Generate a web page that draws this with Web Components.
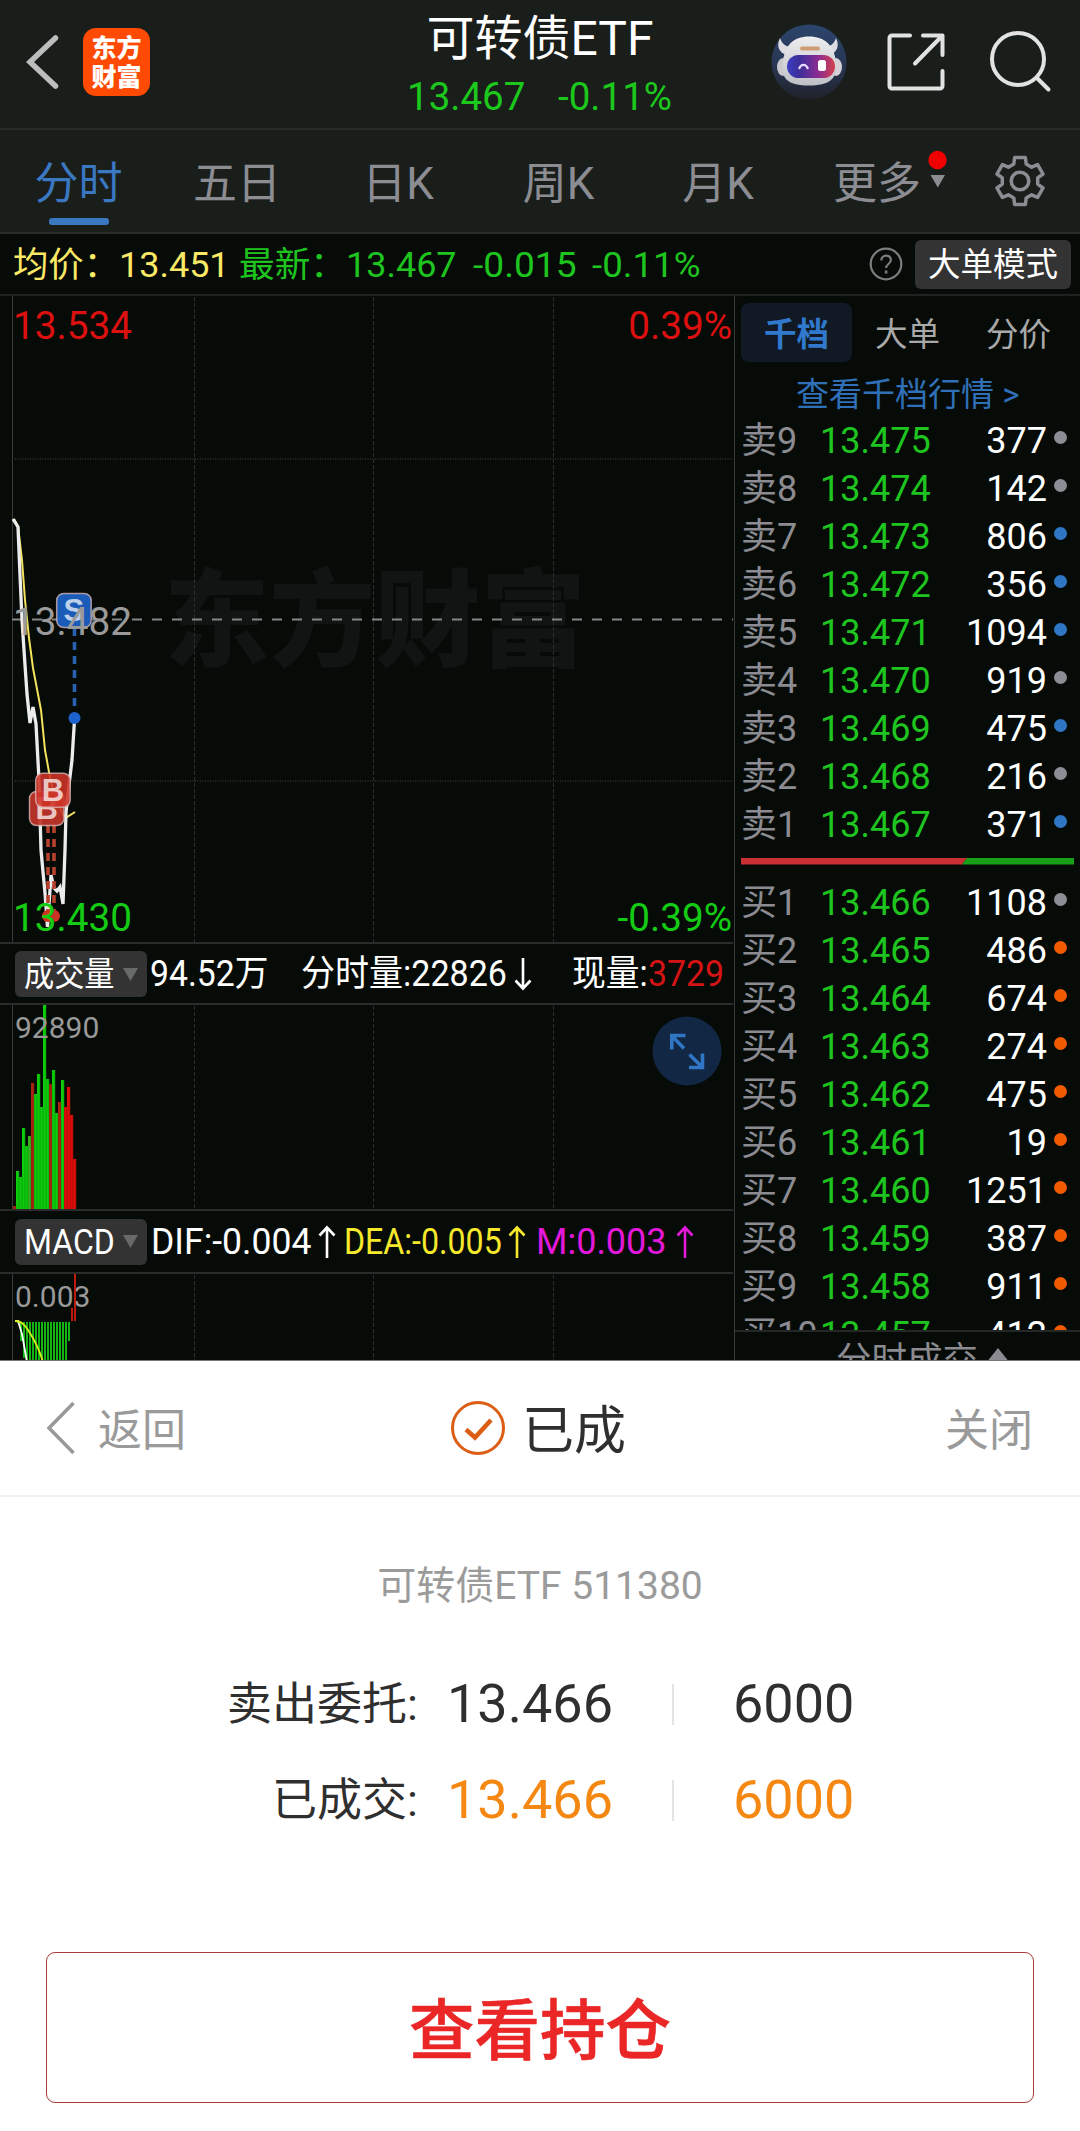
<!DOCTYPE html>
<html lang="zh-CN">
<head>
<meta charset="utf-8">
<title>可转债ETF</title>
<style>
    body {
        margin: 0;
        font-family: Roboto, "Noto Sans CJK SC", sans-serif;
        background: #fff;
    }
</style>
</head>
<body>
<stock-page></stock-page>

<script>
// attaches an open shadow root filled with the given markup
function render(el, html) {
    const template = document.createElement('template');
    template.innerHTML = html;
    el.attachShadow({ mode: 'open' }).appendChild(template.content.cloneNode(true));
}

// text squeezed or stretched to an exact width
class FitText extends HTMLElement {
    connectedCallback() {
        render(this, /*html*/`
            <style>
                :host { display: block; flex: none; white-space: nowrap; }
                span { display: inline-block; transform-origin: 0 50%; }
            </style>
            <span><slot></slot></span>
        `);
        const w = Number(this.getAttribute('w'));
        const span = this.shadowRoot.querySelector('span');
        this.style.width = w + 'px';
        span.style.transform = `scaleX(${w / span.offsetWidth})`;
    }
}
customElements.define('fit-text', FitText);

class TrendArrow extends HTMLElement {
    connectedCallback() {
        const down = this.hasAttribute('down');
        render(this, /*html*/`
            <style>
                :host { display: block; flex: none; width: 18px; height: 34px; }
                svg { display: block; ${down ? 'transform: rotate(180deg);' : ''} }
            </style>
            <svg width="18" height="34" fill="none" stroke="currentColor" stroke-width="2.6">
                <path d="M9 33V2M1.5 10.5L9 2.5l7.5 8"/>
            </svg>
        `);
    }
}
customElements.define('trend-arrow', TrendArrow);

class AppHeader extends HTMLElement {
    connectedCallback() {
        render(this, /*html*/`
            <style>
                :host {
                    display: flex;
                    box-sizing: border-box;
                    height: 130px;
                    background: #1a1e1b;
                    border-bottom: 2px solid #292b29;
                }
                .left, .right { width: 380px; display: flex; }
                .back { margin: 34px 0 0 26px; }
                .logo {
                    width: 67px;
                    height: 68px;
                    margin: 28px 0 0 23px;
                    border-radius: 13px;
                    background: #ff4a04;
                    color: #fff;
                    font: 900 25px/29px "Noto Sans CJK SC", sans-serif;
                    text-align: center;
                    padding-top: 4px;
                    box-sizing: border-box;
                }
                .mid { width: 320px; text-align: center; }
                .title { color: #fff; font-size: 48px; line-height: 76px; padding-top: 1px; white-space: nowrap; }
                .quote {
                    display: flex;
                    justify-content: space-between;
                    margin: 0 28px 0 27px;
                    color: #1cc81c;
                    font-size: 38.5px;
                    line-height: 40px;
                }
                .robot { margin: 24px 0 0 71px; }
                .share { margin: 30px 0 0 37px; }
                .search { margin: 30px 0 0 40px; }
                svg { flex: none; display: block; }
            </style>
            <div class="left">
                <svg class="back" width="34" height="56" fill="none" stroke="#bdbdbd" stroke-width="5.5" stroke-linecap="round">
                    <path d="M29.500 4L4 28l25.500 24"/>
                </svg>
                <div class="logo">东方<br>财富</div>
            </div>
            <div class="mid">
                <div class="title"><slot></slot></div>
                <div class="quote"><span>13.467</span><span>-0.11%</span></div>
            </div>
            <div class="right">
                <svg class="robot" width="76" height="76">
                    <defs>
                        <linearGradient id="bg" x1="0" y1="0" x2="0" y2="1">
                            <stop offset="0" stop-color="#2c456c"/>
                            <stop offset=".6" stop-color="#283450"/>
                            <stop offset="1" stop-color="#1f222b"/>
                        </linearGradient>
                        <linearGradient id="visor">
                            <stop offset="0" stop-color="#3c3fc0"/>
                            <stop offset=".25" stop-color="#3b2f9c"/>
                            <stop offset=".65" stop-color="#8c2c92"/>
                            <stop offset="1" stop-color="#d5404c"/>
                        </linearGradient>
                        <linearGradient id="shell" x1="0" y1="0" x2="0" y2="1">
                            <stop offset="0" stop-color="#eeeef0"/>
                            <stop offset="1" stop-color="#bfc0c6"/>
                        </linearGradient>
                    </defs>
                    <circle cx="38" cy="38" r="37.500" fill="url(#bg)"/>
                    <path d="M9 14c-4 8-1 15 7 17l5-8c-6 0-10-3-12-9zM65 14c4 8 1 15-7 17l-5-8c6 0 10-3 12-9z" fill="#dcdce2"/>
                    <ellipse cx="12" cy="43" rx="6" ry="9" fill="#c9c8cf"/>
                    <ellipse cx="65" cy="43" rx="6" ry="9" fill="#d6d1d6"/>
                    <path d="M38 12.500c16 0 25 9 27 25 2 18-7 24-27 24s-29-6-26-24c2-16 10-25 26-25z" fill="url(#shell)"/>
                    <rect x="29" y="22.500" width="20" height="4" rx="2" fill="#cf9d73"/>
                    <rect x="16" y="31" width="48" height="23" rx="11.500" fill="url(#visor)"/>
                    <path d="M28 45c2-5.500 7-5.500 9 0" fill="none" stroke="#e6dcff" stroke-width="2.200"/>
                    <rect x="47" y="36" width="8" height="11" rx="2.500" fill="#fff"/>
                </svg>
                <svg class="share" width="64" height="64" fill="none" stroke="#e2e2e2" stroke-width="4" stroke-linecap="round" stroke-linejoin="round">
                    <path d="M26 5.500H8a2.500 2.500 0 0 0-2.500 2.500v48A2.500 2.500 0 0 0 8 58.500h48A2.500 2.500 0 0 0 58.500 56V41M39 5.500h19.500V25M57.500 6.500L31 33.500"/>
                </svg>
                <svg class="search" width="64" height="64" fill="none" stroke="#e2e2e2" stroke-width="4" stroke-linecap="round">
                    <circle cx="30" cy="29" r="26"/>
                    <path d="M49 48l11.500 11.500"/>
                </svg>
            </div>
        `);
    }
}
customElements.define('app-header', AppHeader);

class PeriodTab extends HTMLElement {
    connectedCallback() {
        render(this, /*html*/`
            <style>
                :host {
                    display: flex;
                    flex-direction: column;
                    align-items: center;
                    width: 160px;
                    color: #8c8c93;
                    font-size: 44px;
                    line-height: 64px;
                    padding-top: 22px;
                    box-sizing: border-box;
                }
                :host([active]) { color: #3a78c2; }
                i { display: none; width: 60px; height: 7px; border-radius: 3px; background: #3a78c2; margin-top: 2px; }
                :host([active]) i { display: block; }
            </style>
            <span><slot></slot></span>
            <i></i>
        `);
    }
}
customElements.define('period-tab', PeriodTab);

class PeriodTabs extends HTMLElement {
    // six-tooth gear outline around the origin
    gear() {
        const pts = [];
        for (let a = -90; a < 270; a += 60) {
            [[24, -13], [24, 13], [18, 20], [18, 40]].forEach(([r, d]) => {
                const t = (a + d) * Math.PI / 180;
                pts.push((r * Math.cos(t)).toFixed(1) + ',' + (r * Math.sin(t)).toFixed(1));
            });
        }
        return pts.join(' ');
    }
    connectedCallback() {
        render(this, /*html*/`
            <style>
                :host {
                    display: flex;
                    box-sizing: border-box;
                    height: 104px;
                    background: #1a1e1b;
                    border-bottom: 2px solid #292b29;
                }
                .more { position: relative; width: 158px; }
                .more svg { position: absolute; left: 128px; top: 19px; }
                .gear { margin: 22px 0 0 35px; }
            </style>
            <period-tab active style="width:157px">分时</period-tab>
            <period-tab>五日</period-tab>
            <period-tab style="width:162px">日K</period-tab>
            <period-tab style="width:159px">周K</period-tab>
            <period-tab>月K</period-tab>
            <div class="more">
                <period-tab style="width:158px">更多</period-tab>
                <svg width="22" height="42">
                    <circle cx="11.500" cy="11" r="9.200" fill="#f00000"/>
                    <path d="M4.500 26h14.500l-7.200 12.500z" fill="#8c8c93"/>
                </svg>
            </div>
            <svg class="gear" width="58" height="58" viewBox="-29 -29 58 58" fill="none" stroke="#8c8c93" stroke-width="3.500" stroke-linejoin="round">
                <polygon points="${this.gear()}"/>
                <circle r="8.800"/>
            </svg>
        `);
    }
}
customElements.define('period-tabs', PeriodTabs);

class PriceBar extends HTMLElement {
    connectedCallback() {
        render(this, /*html*/`
            <style>
                :host {
                    display: flex;
                    align-items: center;
                    box-sizing: border-box;
                    height: 62px;
                    padding: 0 9px 0 13px;
                    font-size: 35px;
                    line-height: 60px;
                    color: #1fc51f;
                    background: #060b08;
                    border-bottom: 2px solid #1f2220;
                }
                .avg { color: #fbe966; }
                fit-text { padding-top: 3px; }
                svg { margin-left: auto; }
                .mode {
                    width: 156px;
                    height: 49px;
                    margin-left: 12px;
                    border-radius: 6px;
                    background: #333;
                    color: #fff;
                    font-size: 32.500px;
                    line-height: 50px;
                    text-align: center;
                }
            </style>
            <fit-text w="106" class="avg">均价：</fit-text>
            <fit-text w="111" class="avg">13.451</fit-text>
            <fit-text w="107" style="margin-left:9px">最新：</fit-text>
            <fit-text w="111">13.467</fit-text>
            <fit-text w="104" style="margin-left:16px">-0.015</fit-text>
            <fit-text w="109" style="margin-left:15px">-0.11%</fit-text>
            <svg width="34" height="34" fill="none" stroke="#7d7d7d">
                <circle cx="17" cy="17" r="15.300" stroke-width="2.200"/>
                <path d="M12.300 13.500c0-6.500 9.600-6.300 9.600-.5 0 4-4.800 4-4.800 8" stroke-width="2.200"/>
                <path d="M17.100 23.500v3" stroke-width="2.600"/>
            </svg>
            <div class="mode">大单模式</div>
        `);
    }
}
customElements.define('price-bar', PriceBar);

const gridLines = h => `
    <g stroke="#2b2e2c" stroke-dasharray="4 2">
        <path d="M194.500 1V${h}M373.500 1V${h}M553.500 1V${h}"/>
    </g>
    <path d="M12.500 0V${h}" stroke="#3a3a3a"/>`;

class MinuteChart extends HTMLElement {
    badge(x, y, letter, color, opacity) {
        return `
            <rect x="${x}" y="${y}" width="34.500" height="34" rx="7" fill="${color}" fill-opacity="${opacity}" stroke="#e0bcbc" stroke-opacity=".75" stroke-width="1.500"/>
            <text class="mark" x="${x + 17.2}" y="${y + 27.5}" text-anchor="middle" fill="#fff" fill-opacity=".72">${letter}</text>`;
    }
    // coordinates are page based, the view box starts at the pane's top
    connectedCallback() {
        render(this, /*html*/`
            <style>
                :host { display: block; height: 646px; border-bottom: 2px solid #2a2c2b; }
                svg { display: block; }
                text { font-family: Roboto, "Noto Sans CJK SC", sans-serif; }
                .mark { font: 700 31px "Liberation Sans", sans-serif; }
            </style>
            <svg width="733" height="646" viewBox="0 296 733 646" fill="none">
                <text x="164" y="658" font-size="105.500" font-weight="900" fill="#101412">东方财富</text>
                <g transform="translate(0 296)">${gridLines(646)}</g>
                <path d="M15 459H733M15 781H733" stroke="#262927" stroke-width="2" stroke-dasharray="1 1.500"/>
                <path d="M12 619.500H733" stroke="#858585" stroke-width="1.800" stroke-dasharray="10 10"/>
                <polyline points="14,519 18,526 22,560 25,600 29,638 33,668 41,710 45,750 49,772 53,790 58,802 63,815 67,817 75,812" stroke="#f3e25c" stroke-width="2"/>
                <polyline points="13,519 18,527 20,575 22,620 25,665 27,694 30,723 33,707 36,724 39,780 41,850 43,872 45,893 47.500,927 49,905 51,875 54,888 57,891 60,887 63,904 65,850 66,812 69,785 72,760 74.500,720" stroke="#ececec" stroke-width="3.300"/>
                <path d="M74.500 628V712" stroke="#2861b0" stroke-width="3.600" stroke-dasharray="8 6"/>
                <circle cx="74.500" cy="718" r="6" fill="#1e62cf"/>
                <path d="M48 825V916M54 825V916" stroke="#b8402f" stroke-width="3.600" stroke-dasharray="8 6"/>
                <circle cx="48" cy="916" r="6" fill="#cc3322"/>
                <circle cx="54" cy="916" r="6" fill="#cc3322"/>
                ${this.badge(56.700, 593.500, 'S', '#1a5cb8', 1)}
                ${this.badge(29.500, 791.500, 'B', '#c3352a', 0.92)}
                ${this.badge(35.700, 773.200, 'B', '#cf3328', 0.88)}
                <g font-size="38.700">
                    <text x="13" y="339" fill="#dd1010">13.534</text>
                    <text x="732" y="339" text-anchor="end" fill="#dd1010">0.39%</text>
                    <text x="13" y="634.500" fill="#9a9a9a">13.482</text>
                    <text x="13" y="930.500" fill="#14cc14">13.430</text>
                    <text x="732" y="930.500" text-anchor="end" fill="#14cc14">-0.39%</text>
                </g>
            </svg>
        `);
    }
}
customElements.define('minute-chart', MinuteChart);

class VolumeChart extends HTMLElement {
    connectedCallback() {
        // [direction, top], one bar per minute, 3px wide
        const bars = [['r', 201], ['g', 166], ['g', 172], ['g', 123], ['g', 141], ['m', 131], ['r', 78],
            ['g', 89], ['g', 69], ['g', 102], ['g', 0], ['g', 74], ['r', 79], ['g', 65], ['g', 108],
            ['r', 97], ['g', 75], ['R', 102], ['R', 82], ['R', 110], ['R', 154]];
        const color = { g: '#0ccc0c', m: '#35b220', r: '#a8240c', R: '#e60808' };
        const rects = bars.map(([c, top], i) =>
            `<rect x="${13 + i * 3}" y="${top}" width="3.200" height="${205 - top}" fill="${color[c]}"/>`).join('');
        const lines = bars.map((b, i) => `M${16 + i * 3} ${Math.max(b[1], 4)}V205`).join('');
        render(this, /*html*/`
            <style>
                :host { display: block; position: relative; height: 204px; border-bottom: 2px solid #2a2c2b; }
                svg { display: block; }
                text { font: 30px Roboto, sans-serif; }
                .expand { position: absolute; left: 652px; top: 11px; }
            </style>
            <svg width="733" height="204">
                ${gridLines(204)}
                ${rects}
                <path d="${lines}" stroke="#063806" stroke-opacity=".35" stroke-width=".8"/>
                <text x="15" y="32.500" fill="#999">92890</text>
            </svg>
            <svg class="expand" width="70" height="70" fill="none" stroke="#3076c4" stroke-width="3.600">
                <circle cx="35" cy="35" r="34.500" fill="#122743" stroke="none"/>
                <path d="M33.500 19.500H19.800V33.500M20 20L32 32.500M37 51.500H50.500V37.500M50 51L37.500 38.500"/>
            </svg>
        `);
    }
}
customElements.define('volume-chart', VolumeChart);

class MacdChart extends HTMLElement {
    connectedCallback() {
        let bars = '';
        for (let x = 20; x < 70; x += 3) {
            const h = x === 20 ? 19 : x === 68 ? 19 : x === 23 ? 36 : 42;
            bars += `<rect x="${x}" y="48" width="2" height="${h}" fill="#14b414"/>`;
        }
        render(this, /*html*/`
            <style>
                :host { display: block; height: 88px; }
                svg { display: block; }
                text { font: 30px Roboto, sans-serif; }
            </style>
            <svg width="733" height="88" fill="none">
                ${gridLines(88)}
                ${bars}
                <text x="15" y="32.500" fill="#999">0.003</text>
                <path d="M72 34V47M75 0V47" stroke="#c01a10" stroke-width="2"/>
                <path d="M15 47h3l4 13 5 28" stroke="#fff" stroke-width="1.800"/>
                <path d="M15 47c6 0 9 3 13 9s10 15 15 32" stroke="#d9f01c" stroke-width="1.800"/>
            </svg>
        `);
    }
}
customElements.define('macd-chart', MacdChart);

class IndicatorBar extends HTMLElement {
    connectedCallback() {
        render(this, /*html*/`
            <style>
                :host {
                    display: flex;
                    align-items: center;
                    box-sizing: border-box;
                    height: 63px;
                    padding-left: 15px;
                    color: #fff;
                    font-size: 36px;
                    line-height: 60px;
                    border-bottom: 2px solid #2a2c2b;
                }
                .pick {
                    display: flex;
                    align-items: center;
                    justify-content: space-between;
                    box-sizing: border-box;
                    width: 132px;
                    height: 46px;
                    padding: 0 9px;
                    border-radius: 6px;
                    background: #333;
                    font-size: 34.500px;
                    line-height: 46px;
                    flex: none;
                }
            </style>
            <div class="pick">
                <fit-text w="91">${this.getAttribute('name')}</fit-text>
                <svg width="15" height="13"><path d="M0 0H15L7.500 13z" fill="#686a69"/></svg>
            </div>
            <slot></slot>
        `);
    }
}
customElements.define('indicator-bar', IndicatorBar);

class BookLevel extends HTMLElement {
    connectedCallback() {
        render(this, /*html*/`
            <style>
                :host {
                    display: flex;
                    align-items: center;
                    height: 48px;
                    line-height: 48px;
                    font-size: 36px;
                    white-space: nowrap;
                }
                .name { width: 79px; color: #8b8b91; }
                .price { color: #1fc51f; }
                .qty { flex: 1; text-align: right; color: #fff; }
                i { width: 13px; height: 13px; border-radius: 50%; margin: -7px 13px 0 7px; background: ${this.getAttribute('dot')}; }
            </style>
            <span class="name">${this.getAttribute('name')}</span>
            <span class="price">${this.getAttribute('price')}</span>
            <span class="qty">${this.getAttribute('qty')}</span>
            <i></i>
        `);
    }
}
customElements.define('book-level', BookLevel);

class OrderBook extends HTMLElement {
    rows(side, list) {
        return list.map(([n, price, qty, dot]) =>
            `<book-level name="${side}${n}" price="${price}" qty="${qty}" dot="${dot}"></book-level>`).join('');
    }
    connectedCallback() {
        const grey = '#8d8d95', blue = '#2f77c6', orange = '#f05a00';
        const sells = [
            [9, '13.475', 377, grey], [8, '13.474', 142, grey], [7, '13.473', 806, blue],
            [6, '13.472', 356, blue], [5, '13.471', 1094, blue], [4, '13.470', 919, grey],
            [3, '13.469', 475, blue], [2, '13.468', 216, grey], [1, '13.467', 371, blue]
        ];
        const buys = [
            [1, '13.466', 1108, grey], [2, '13.465', 486, orange], [3, '13.464', 674, orange],
            [4, '13.463', 274, orange], [5, '13.462', 475, orange], [6, '13.461', 19, orange],
            [7, '13.460', 1251, orange], [8, '13.459', 387, orange], [9, '13.458', 911, orange],
            [10, '13.457', 412, orange]
        ];
        render(this, /*html*/`
            <style>
                :host {
                    display: flex;
                    flex-direction: column;
                    width: 346px;
                    box-sizing: border-box;
                    border-left: 1px solid #3a3a3a;
                    height: 1065px;
                    overflow: hidden;
                }
                .tabs { display: flex; padding: 7px 0 0 6px; flex: none; }
                .tabs span {
                    width: 111px;
                    height: 59px;
                    line-height: 64px;
                    font-size: 32.500px;
                    text-align: center;
                    border-radius: 8px;
                    color: #a9a9a9;
                }
                .tabs .on { background: #101924; color: #3079cc; font-weight: 700; }
                .link { flex: none; margin: 10px 0 0 61px; height: 45px; line-height: 45px; font-size: 33px; color: #3070b8; }
                .list { padding-left: 6px; flex: none; }
                .ratio { flex: none; display: block; margin: 9px 0 14px 6px; }
                .clip { height: 451px; overflow: hidden; border-bottom: 2px solid #242725; }
                .foot {
                    display: flex;
                    flex: none;
                    align-items: center;
                    margin-left: 101px;
                    padding-top: 5px;
                    font-size: 35.500px;
                    line-height: 46px;
                    color: #8b8b91;
                }
                .foot svg { margin: -1px 0 0 8px; }
            </style>
            <div class="tabs"><span class="on">千档</span><span>大单</span><span>分价</span></div>
            <div class="link">查看千档行情 &gt;</div>
            <div class="list">${this.rows('卖', sells)}</div>
            <svg class="ratio" width="333" height="7">
                <path d="M0 0H226L221 6.500H0z" fill="#c92f33"/>
                <path d="M226 0H333V6.500H221z" fill="#18a018"/>
            </svg>
            <div class="list clip">${this.rows('买', buys)}</div>
            <div class="foot">分时成交<svg width="24" height="24"><path d="M12 0l12 15H0z" fill="#8b8b91"/></svg></div>
        `);
    }
}
customElements.define('order-book', OrderBook);

class OrderRow extends HTMLElement {
    connectedCallback() {
        render(this, /*html*/`
            <style>
                :host {
                    display: grid;
                    grid-template-columns: 418px 254px 2px auto;
                    align-items: center;
                    height: 96px;
                    line-height: 96px;
                    font-size: 54px;
                    color: #2f2f2f;
                }
                .name { font-size: 45px; text-align: right; padding-top: 2px; }
                .price { padding-left: 29px; }
                .qty { padding-left: 59px; }
                .price, .qty { color: var(--value, #2f2f2f); }
                i { height: 41px; background: #e4e4e4; }
            </style>
            <span class="name"><slot></slot></span>
            <span class="price">${this.getAttribute('price')}</span>
            <i></i>
            <span class="qty">${this.getAttribute('qty')}</span>
        `);
    }
}
customElements.define('order-row', OrderRow);

class ResultSheet extends HTMLElement {
    connectedCallback() {
        render(this, /*html*/`
            <style>
                :host { display: block; height: 770px; background: #fff; }
                header {
                    display: grid;
                    grid-template-columns: 1fr auto 1fr;
                    align-items: center;
                    box-sizing: border-box;
                    height: 136px;
                    border-bottom: 2px solid #f1f1f1;
                    color: #9a9a9a;
                    font-size: 44px;
                }
                header div { display: flex; align-items: center; }
                header span { line-height: 60px; padding-top: 6px; }
                .back svg { margin: 0 23px 0 45px; }
                .state { color: #2f2f2f; font-size: 52px; padding-right: 4px; }
                .state svg { margin-right: 16px; }
                .state span { padding-top: 8px; }
                .close { justify-content: flex-end; padding-right: 47px; }
                .name { margin-top: 59px; text-align: center; font-size: 39px; line-height: 60px; color: #9b9b9b; }
                .rows { margin-top: 39px; }
                .btn {
                    box-sizing: border-box;
                    height: 151px;
                    margin: 105px 46px 0;
                    border: 1.500px solid #a83c3c;
                    border-radius: 9px;
                    text-align: center;
                    font-size: 65.500px;
                    font-weight: 500;
                    line-height: 158px;
                    color: #ea2626;
                    -webkit-text-stroke: .6px #ea2626;
                }
            </style>
            <header>
                <div class="back">
                    <svg width="30" height="54" fill="none" stroke="#999" stroke-width="3.500"><path d="M28.500 2L4 27l24.500 25"/></svg>
                    <span>返回</span>
                </div>
                <div class="state">
                    <svg width="56" height="56" fill="none" stroke="#dc5d14">
                        <circle cx="28" cy="28" r="25.500" stroke-width="3"/>
                        <path d="M16 29.500l9 8 16-17.500" stroke-width="4.500"/>
                    </svg>
                    <span>已成</span>
                </div>
                <div class="close"><span>关闭</span></div>
            </header>
            <div class="name">可转债ETF 511380</div>
            <div class="rows">
                <order-row price="13.466" qty="6000">卖出委托:</order-row>
                <order-row price="13.466" qty="6000" style="--value:#f58713">已成交:</order-row>
            </div>
            <div class="btn">查看持仓</div>
        `);
    }
}
customElements.define('result-sheet', ResultSheet);

class StockPage extends HTMLElement {
    connectedCallback() {
        render(this, /*html*/`
            <style>
                :host { display: block; width: 1080px; height: 2131px; overflow: hidden; }
                .market { display: flex; height: 1064px; background: #060b08; border-bottom: 1px solid #777; overflow: hidden; }
                .charts { width: 733px; margin-right: 1px; }
                .yellow { color: #f6e82a; }
                .pink { color: #e318da; }
            </style>
            <app-header>可转债ETF</app-header>
            <period-tabs></period-tabs>
            <price-bar></price-bar>
            <div class="market">
                <div class="charts">
                    <minute-chart></minute-chart>
                    <indicator-bar name="成交量" style="height:61px;padding-top:1px">
                        <fit-text w="118" style="margin-left:3px">94.52万</fit-text>
                        <fit-text w="206" style="margin-left:33px">分时量:22826</fit-text>
                        <trend-arrow down style="margin-left:7px"></trend-arrow>
                        <fit-text w="76" style="margin-left:40px">现量:</fit-text>
                        <fit-text w="76" style="color:#d41414">3729</fit-text>
                    </indicator-bar>
                    <volume-chart></volume-chart>
                    <indicator-bar name="MACD">
                        <fit-text w="160" style="margin-left:4px">DIF:-0.004</fit-text>
                        <trend-arrow style="margin-left:7px"></trend-arrow>
                        <fit-text w="158" class="yellow" style="margin-left:8px">DEA:-0.005</fit-text>
                        <trend-arrow class="yellow" style="margin-left:6px"></trend-arrow>
                        <fit-text w="131" class="pink" style="margin-left:10px">M:0.003</fit-text>
                        <trend-arrow class="pink" style="margin-left:9px"></trend-arrow>
                    </indicator-bar>
                    <macd-chart></macd-chart>
                </div>
                <order-book></order-book>
            </div>
            <result-sheet></result-sheet>
        `);
    }
}
customElements.define('stock-page', StockPage);
</script>
</body>
</html>
